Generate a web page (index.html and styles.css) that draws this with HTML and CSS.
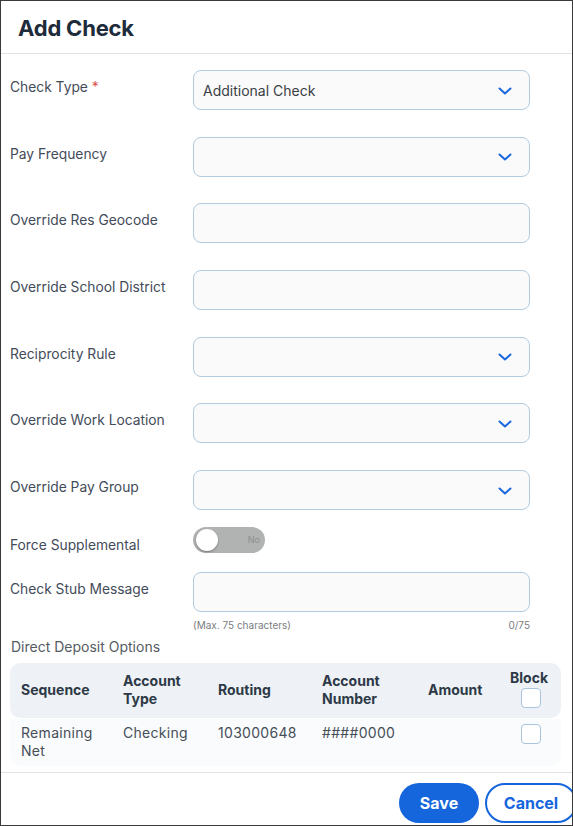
FILE: index.html
```html
<!DOCTYPE html>
<html>
<head>
<meta charset="utf-8">
<link rel="stylesheet" href="styles.css">
</head>
<body>
<div class="frame">
  <header class="head"><h1 class="title">Add Check</h1></header>
  <main class="content">
    <div class="form">
      <div class="row">
        <label class="lbl">Check Type <span class="req">*</span></label>
        <div class="field select"><span class="val">Additional Check</span><svg class="chev" viewBox="0 0 14 8" width="14" height="8"><path d="M1.5 1.5 L7 6.5 L12.5 1.5" fill="none" stroke="#1a66dd" stroke-width="2" stroke-linecap="round" stroke-linejoin="round"/></svg></div>
      </div>
      <div class="row">
        <label class="lbl">Pay Frequency</label>
        <div class="field select"><span class="val"></span><svg class="chev" viewBox="0 0 14 8" width="14" height="8"><path d="M1.5 1.5 L7 6.5 L12.5 1.5" fill="none" stroke="#1a66dd" stroke-width="2" stroke-linecap="round" stroke-linejoin="round"/></svg></div>
      </div>
      <div class="row">
        <label class="lbl">Override Res Geocode</label>
        <div class="field"></div>
      </div>
      <div class="row">
        <label class="lbl">Override School District</label>
        <div class="field"></div>
      </div>
      <div class="row">
        <label class="lbl">Reciprocity Rule</label>
        <div class="field select"><span class="val"></span><svg class="chev" viewBox="0 0 14 8" width="14" height="8"><path d="M1.5 1.5 L7 6.5 L12.5 1.5" fill="none" stroke="#1a66dd" stroke-width="2" stroke-linecap="round" stroke-linejoin="round"/></svg></div>
      </div>
      <div class="row">
        <label class="lbl">Override Work Location</label>
        <div class="field select"><span class="val"></span><svg class="chev" viewBox="0 0 14 8" width="14" height="8"><path d="M1.5 1.5 L7 6.5 L12.5 1.5" fill="none" stroke="#1a66dd" stroke-width="2" stroke-linecap="round" stroke-linejoin="round"/></svg></div>
      </div>
      <div class="row">
        <label class="lbl">Override Pay Group</label>
        <div class="field select"><span class="val"></span><svg class="chev" viewBox="0 0 14 8" width="14" height="8"><path d="M1.5 1.5 L7 6.5 L12.5 1.5" fill="none" stroke="#1a66dd" stroke-width="2" stroke-linecap="round" stroke-linejoin="round"/></svg></div>
      </div>
      <div class="row row-toggle">
        <label class="lbl">Force Supplemental</label>
        <div class="toggle"><span class="knob"></span><span class="no">No</span></div>
      </div>
      <div class="row row-stub">
        <label class="lbl">Check Stub Message</label>
        <div class="stub">
          <div class="field"></div>
          <div class="hint"><span>(Max. 75 characters)</span><span>0/75</span></div>
        </div>
      </div>
    </div>

    <div class="dd-title">Direct Deposit Options</div>
    <div class="table">
      <div class="trow thead">
        <div class="c c1">Sequence</div>
        <div class="c c2">Account<br>Type</div>
        <div class="c c3">Routing</div>
        <div class="c c4">Account<br>Number</div>
        <div class="c c5">Amount</div>
        <div class="c c6 blockh"><span>Block</span><span class="cb"></span></div>
      </div>
      <div class="trow tbody">
        <div class="c c1">Remaining<br>Net</div>
        <div class="c c2">Checking</div>
        <div class="c c3">103000648</div>
        <div class="c c4">####0000</div>
        <div class="c c5"></div>
        <div class="c c6 blockb"><span class="cb"></span></div>
      </div>
    </div>
  </main>
  <footer class="foot">
    <button class="btn save">Save</button>
    <button class="btn cancel">Cancel</button>
  </footer>
</div>
</body>
</html>
```

FILE: styles.css
```css
* { box-sizing: border-box; }
html, body { margin: 0; padding: 0; background: #fff; }
body { font-family: Inter, "Noto Sans", sans-serif; }
.frame {
  width: 573px;
  height: 826px;
  border: 1px solid #3a3a3a;
  overflow: hidden;
  display: flex;
  flex-direction: column;
  background: #fff;
}
.head {
  height: 53px;
  border-bottom: 1px solid #e2e2e2;
  display: flex;
  align-items: center;
  padding-left: 17px;
  flex: none;
}
.title {
  margin: 0;
  font-size: 22px;
  font-weight: 700;
  color: #1d2b3b;
  letter-spacing: -0.2px;
  padding-top: 2px;
}
.content {
  padding: 16px 42px 0 9px;
  flex: none;
}
.form {
  display: flex;
  flex-direction: column;
  gap: 26.7px;
}
.row {
  display: grid;
  grid-template-columns: 183px 1fr;
  align-items: start;
}
.lbl {
  font-size: 13.8px;
  line-height: 20px;
  color: #434b59;
  padding-top: 7px;
}
.req { color: #d9534f; }
.field {
  height: 40px;
  border: 1px solid #b2cbe0;
  border-radius: 8px;
  background: #fafafa;
  display: flex;
  align-items: center;
  padding: 0 17px 0 9px;
}
.val {
  flex: 1;
  font-size: 14px;
  color: #3b3f45;
  padding-top: 1px;
}
.chev { flex: none; display: block; margin-top: 1px; }
.row-toggle { margin-top: -10px; }
.row-toggle .lbl { padding-top: 8px; }
.toggle {
  width: 72px;
  height: 26px;
  border-radius: 13px;
  background: #b1b3b3;
  position: relative;
  display: flex;
  align-items: center;
  justify-content: flex-end;
  padding-right: 5px;
}
.knob {
  position: absolute;
  left: 3px;
  top: 2px;
  width: 22px;
  height: 22px;
  border-radius: 50%;
  background: #fff;
  box-shadow: 0 1px 2px rgba(0,0,0,0.35);
}
.no { font-size: 9px; color: #8c8e8e; }
.row-stub { margin-top: -9.7px; }
.hint {
  display: flex;
  justify-content: space-between;
  font-size: 10px;
  color: #7a7d82;
  margin-top: 7px;
  line-height: 12px;
}
.dd-title {
  font-size: 14px;
  color: #555b63;
  margin: 6px 0 0 1px;
  line-height: 20px;
}
.table {
  margin-top: 6px;
  width: 551px;
}
.trow {
  display: grid;
  grid-template-columns: 102px 95px 104px 106px 82px 1fr;
  padding-left: 11px;
  align-items: center;
  font-size: 14px;
  line-height: 18px;
}
.thead {
  background: #eef2f7;
  border-radius: 10px;
  height: 55px;
  font-weight: 700;
  color: #2d3946;
}
.tbody {
  background: #fafbfc;
  border-radius: 0 0 10px 10px;
  margin-top: 1px;
  height: 47px;
  align-items: start;
  padding-top: 5px;
  color: #464e58;
  letter-spacing: 0.3px;
}
.blockh {
  display: flex;
  flex-direction: column;
  align-items: flex-start;
  margin-top: -4px;
}
.blockh .cb { margin: 1px 0 0 11px; }
.blockb { padding-left: 11px; padding-top: 0; }
.cb {
  display: block;
  width: 20px;
  height: 20px;
  border: 1px solid #a9c5dd;
  border-radius: 4px;
  background: #fff;
}
.foot {
  margin-top: 6px;
  border-top: 1px solid #e2e2e2;
  display: flex;
  gap: 6px;
  padding: 10px 0 0 398px;
  flex: none;
}
.btn {
  height: 40px;
  border-radius: 20px;
  font-family: Inter, "Noto Sans", sans-serif;
  font-size: 16px;
  font-weight: 700;
  flex: none;
  cursor: pointer;
}
.save {
  width: 80px;
  background: #1565dc;
  color: #fff;
  border: none;
}
.cancel {
  width: 92px;
  background: #fff;
  color: #1565dc;
  border: 2px solid #1565dc;
}
```
